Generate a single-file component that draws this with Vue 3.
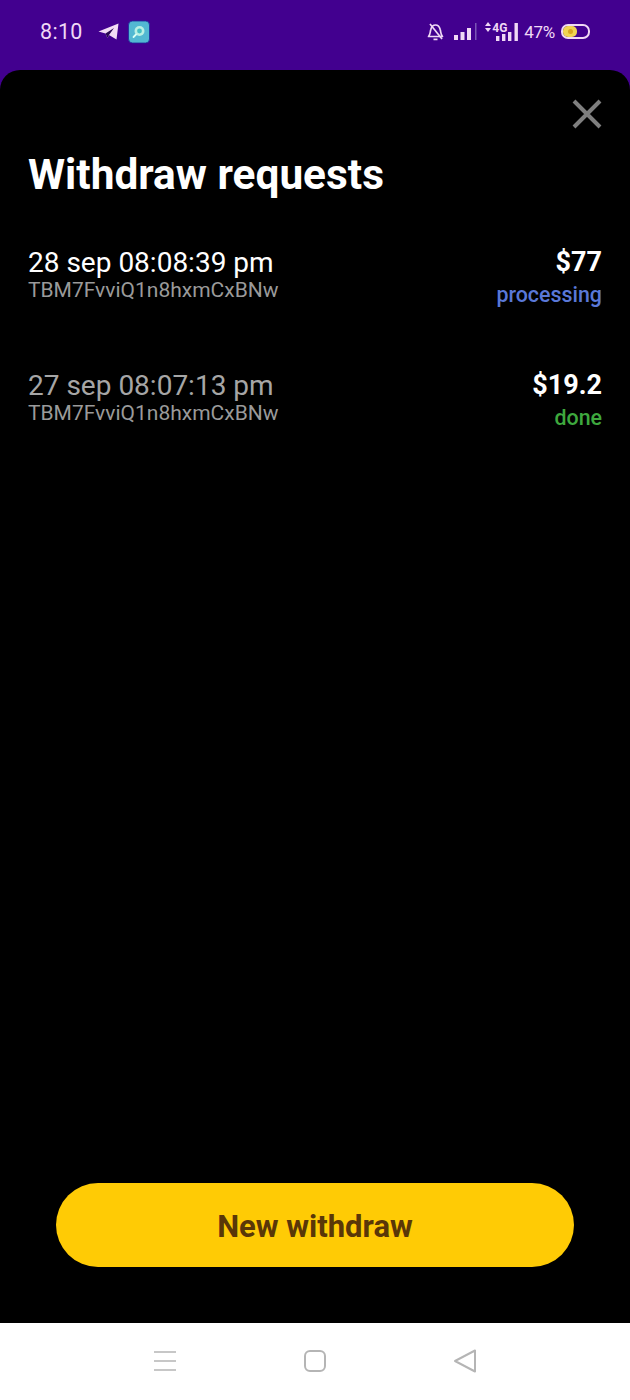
<script setup>
const rows = [
  { date: '28 sep 08:08:39 pm', addr: 'TBM7FvviQ1n8hxmCxBNw', amount: '$77', status: 'processing', cls: 'processing', dim: false },
  { date: '27 sep 08:07:13 pm', addr: 'TBM7FvviQ1n8hxmCxBNw', amount: '$19.2', status: 'done', cls: 'done', dim: true }
]
</script>

<template>
  <div class="screen">
    <header class="status">
      <div class="status-left">
        <span class="time">8:10</span>
        <svg class="tg" width="21" height="17" viewBox="0 0 21 17">
          <path d="M0.5 8.5 L20.5 0.5 L18.5 16.5 L11 12 L9.5 15 L7.5 10.5 Z" fill="#f3dcf5" />
          <path d="M7.5 10.5 L16 5 L11 12 L9.5 15 Z" fill="#2a0a52" />
        </svg>
        <svg class="app" width="22" height="24" viewBox="0 0 22 24">
          <rect x="0.5" y="1" width="21" height="22" rx="4" fill="#52b8d2" stroke="#1c2a9a" stroke-width="0.8" />
          <circle cx="11.5" cy="11" r="5" fill="#b9f0e4" />
          <circle cx="11.5" cy="11" r="2.4" fill="#45c0c4" />
          <path d="M8 14.5 L5.5 17" stroke="#d8fff4" stroke-width="1.8" stroke-linecap="round" />
        </svg>
      </div>
      <div class="status-right">
        <svg class="bell" width="17" height="18" viewBox="0 0 17 18" fill="none" stroke="#f0d8f5" stroke-width="1.7" stroke-linejoin="round">
          <path d="M1.5 13.5 C3.5 11.5 3 9 3.8 6.5 C4.5 3.6 6.4 2 8.5 2 C10.6 2 12.5 3.6 13.2 6.5 C14 9 13.5 11.5 15.5 13.5 Z" />
          <path d="M6.5 16.4 H10.5" />
          <path d="M3 1 L15 16" />
        </svg>
        <svg class="sig1" width="23" height="17" viewBox="0 0 23 17">
          <rect x="0" y="12" width="4" height="5" fill="#f0d8f5" />
          <rect x="6.5" y="9" width="4" height="8" fill="#f0d8f5" />
          <rect x="13" y="5" width="4" height="12" fill="#f0d8f5" />
          <rect x="21" y="0" width="1.5" height="17" fill="#7a55b5" />
        </svg>
        <div class="net">
          <span class="arrows"><i></i><i class="down"></i></span>
          <span class="lte">4G</span>
          <svg class="sig2" width="22" height="18" viewBox="0 0 22 18">
            <rect x="0" y="13" width="3.4" height="5" fill="#f0d8f5" />
            <rect x="6" y="11" width="3.4" height="7" fill="#f0d8f5" />
            <rect x="12" y="9" width="3.4" height="9" fill="#f0d8f5" />
            <rect x="18.5" y="0" width="3.4" height="18" fill="#f0d8f5" />
          </svg>
        </div>
        <span class="pct">47%</span>
        <div class="battery"><div class="charge"><i></i></div></div>
      </div>
    </header>

    <main class="sheet">
      <div class="close-row">
        <svg width="30" height="30" viewBox="0 0 30 30" fill="none" stroke="#7f7f7f" stroke-width="4">
          <path d="M2 2 L28 28 M28 2 L2 28" />
        </svg>
      </div>
      <h1 class="title">Withdraw requests</h1>
      <ul class="list">
        <li v-for="r in rows" :key="r.date" class="row">
          <div class="info">
            <div class="date" :class="{ dim: r.dim }">{{ r.date }}</div>
            <div class="addr">{{ r.addr }}</div>
          </div>
          <div class="meta">
            <div class="amount">{{ r.amount }}</div>
            <div class="state" :class="r.cls">{{ r.status }}</div>
          </div>
        </li>
      </ul>
      <button class="cta" type="button">New withdraw</button>
    </main>

    <footer class="nav">
      <svg width="24" height="24" viewBox="0 0 24 24" stroke="#b5b5b5" stroke-width="1.6" fill="none">
        <path d="M1 3 H23 M1 12 H23 M1 21 H23" />
      </svg>
      <svg width="24" height="24" viewBox="0 0 24 24" stroke="#b5b5b5" stroke-width="2" fill="none">
        <rect x="2" y="2" width="20" height="20" rx="5" />
      </svg>
      <svg width="24" height="24" viewBox="0 0 24 24" stroke="#b5b5b5" stroke-width="2" fill="none" stroke-linejoin="round">
        <path d="M22 1.5 V22.5 L2 12 Z" />
      </svg>
    </footer>
  </div>
</template>

<style>
html, body { margin: 0; background: #fff; }
</style>

<style scoped>
.screen {
  width: 630px;
  height: 1400px;
  display: flex;
  flex-direction: column;
  background: #42008f;
  font-family: Roboto, "Liberation Sans", sans-serif;
  overflow: hidden;
}
.status {
  height: 70px;
  flex: none;
  display: flex;
  justify-content: space-between;
  align-items: center;
  padding: 0 40px 7px 40px;
  box-sizing: border-box;
  color: #f0d8f5;
}
.status-left { display: flex; align-items: center; }
.time { font-size: 21.5px; letter-spacing: 0.3px; width: 58px; }
.tg { margin-right: 9px; }
.status-right { display: flex; align-items: center; }
.bell { margin-right: 10px; }
.sig1 { margin-right: 8px; }
.net { position: relative; width: 33px; height: 18px; margin-right: 6px; }
.arrows { position: absolute; left: 0; top: -1px; display: flex; flex-direction: column; gap: 2px; }
.arrows i {
  width: 0; height: 0;
  border-left: 3px solid transparent;
  border-right: 3px solid transparent;
  border-bottom: 4px solid #f0d8f5;
}
.arrows i.down { border-bottom: 0; border-top: 4px solid #f0d8f5; }
.lte { position: absolute; left: 7px; top: -2px; font-size: 12px; font-weight: 700; line-height: 14px; }
.sig2 { position: absolute; left: 11px; top: 0; }
.pct { font-size: 17px; margin-right: 6px; letter-spacing: -0.3px; }
.battery {
  width: 25px;
  height: 11px;
  border: 2px solid #f0d8f5;
  border-radius: 7px;
  padding: 0;
  box-sizing: content-box;
  display: flex;
}
.charge {
  width: 14px;
  background: #f0d352;
  border-radius: 5px;
  display: flex;
  align-items: center;
  justify-content: center;
}
.charge i { width: 5px; height: 5px; border-radius: 50%; background: #d9a520; }

.sheet {
  height: 1253px;
  flex: none;
  background: #000;
  border-radius: 20px 20px 0 0;
  display: flex;
  flex-direction: column;
  box-sizing: border-box;
  padding: 29px 28px 56px;
  color: #fff;
}
.close-row { display: flex; justify-content: flex-end; height: 30px; }
.title {
  margin: 21px 0 0;
  font-size: 42.4px;
  line-height: 50px;
  font-weight: 700;
}
.list { list-style: none; margin: 46px 0 0; padding: 0; flex: 1; }
.row { display: flex; justify-content: space-between; height: 123px; }
.date { font-size: 28px; line-height: 33px; color: #fff; }
.date.dim { color: #a6a6a6; }
.addr { font-size: 21px; line-height: 24px; color: #9a9a9a; margin-top: -1px; }
.meta { text-align: right; }
.amount { font-size: 27px; line-height: 33px; font-weight: 700; }
.state { font-size: 21.4px; line-height: 24px; font-weight: 500; margin-top: 4px; }
.processing { color: #5a78d8; }
.done { color: #3ea83e; }
.cta {
  align-self: center;
  width: 518px;
  height: 84px;
  border: 0;
  border-radius: 42px;
  background: #ffcb05;
  color: #5a3708;
  font-family: inherit;
  font-size: 31px;
  font-weight: 700;
  padding: 2px 0 0;
}
.nav {
  height: 77px;
  flex: none;
  background: #fff;
  display: flex;
  justify-content: center;
  align-items: center;
  gap: 126px;
  padding-bottom: 1px;
  box-sizing: border-box;
}
</style>
